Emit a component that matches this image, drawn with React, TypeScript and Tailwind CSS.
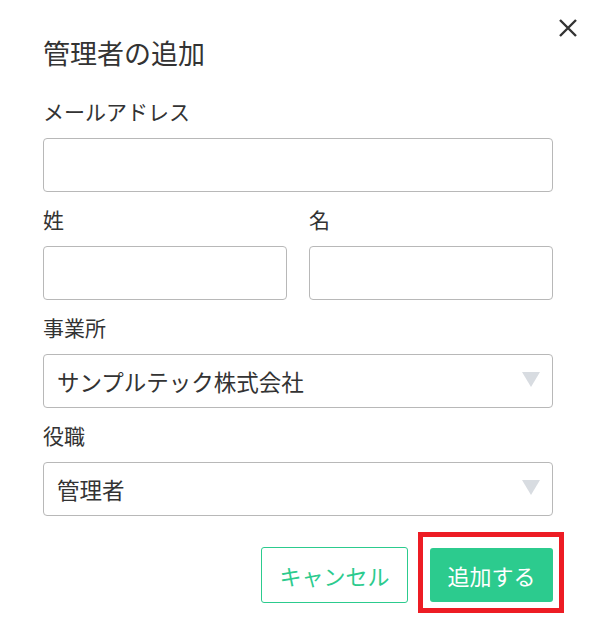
import React from "react";

const font = { fontFamily: '"Noto Sans CJK JP", "Noto Sans", sans-serif' };

function Label({ children }: { children: React.ReactNode }) {
  return <div className="text-[21px] leading-[30px] text-[#333]">{children}</div>;
}

function TextInput() {
  return (
    <input
      type="text"
      className="block w-full h-[54px] rounded-[4px] border border-[#b8b8b8] bg-white px-[13px] text-[22px] text-[#333] outline-none"
    />
  );
}

function Select({ value }: { value: string }) {
  return (
    <div className="relative flex h-[54px] w-full items-center rounded-[4px] border border-[#b8b8b8] bg-white pl-[13px] pr-[40px]">
      <span className="text-[22.5px] leading-[30px] text-[#333]">{value}</span>
      <svg
        className="absolute right-[12px] top-[17px]"
        width="18"
        height="15"
        viewBox="0 0 18 15"
      >
        <polygon points="0,0 18,0 9,15" fill="#d8dce1" />
      </svg>
    </div>
  );
}

export default function App() {
  return (
    <div
      className="relative h-[644px] w-[592px] bg-white pl-[43px] pr-[39px] pt-[35px]"
      style={font}
    >
      <button className="absolute left-[558px] top-[18px] h-[20px] w-[20px]" aria-label="close">
        <svg width="20" height="20" viewBox="0 0 20 20">
          <path d="M2 2 L18 18 M18 2 L2 18" stroke="#333" strokeWidth="2.4" strokeLinecap="butt" />
        </svg>
      </button>

      <h2 className="text-[27px] font-normal leading-[36px] text-[#333]">管理者の追加</h2>

      <div className="mt-[25px] flex flex-col gap-[12px]">
        <Label>メールアドレス</Label>
        <TextInput />
      </div>

      <div className="mt-[12px] grid grid-cols-2 gap-x-[22px]">
        <div className="flex flex-col gap-[12px]">
          <Label>姓</Label>
          <TextInput />
        </div>
        <div className="flex flex-col gap-[12px]">
          <Label>名</Label>
          <TextInput />
        </div>
      </div>

      <div className="mt-[12px] flex flex-col gap-[12px]">
        <Label>事業所</Label>
        <Select value="サンプルテック株式会社" />
      </div>

      <div className="mt-[12px] flex flex-col gap-[12px]">
        <Label>役職</Label>
        <Select value="管理者" />
      </div>

      <div className="mt-[31px] flex items-center justify-end gap-[22px]">
        <button className="h-[56px] w-[147px] rounded-[3px] border border-[#2ccb8e] bg-white text-[22px] text-[#2ccb8e]">
          キャンセル
        </button>
        <div className="relative">
          <button className="block h-[54px] w-[123px] rounded-[3px] bg-[#2ccb8e] text-[22px] text-white">
            追加する
          </button>
          <div className="pointer-events-none absolute -left-[12px] -right-[11px] -top-[16px] -bottom-[11px] border-[5px] border-[#ed1c24]" />
        </div>
      </div>
    </div>
  );
}
